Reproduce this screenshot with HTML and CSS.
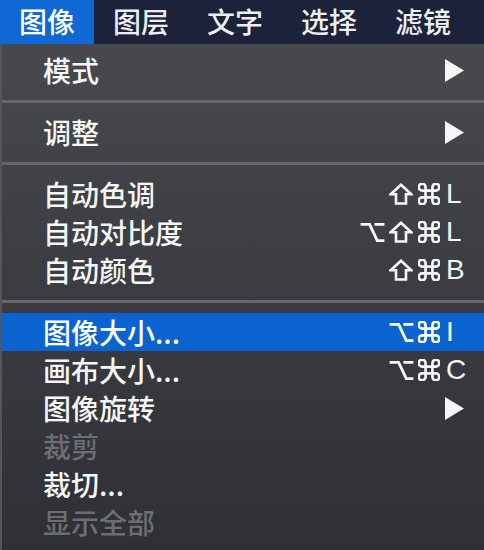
FILE: index.html
```html
<!DOCTYPE html>
<html lang="zh-CN">
<head>
<meta charset="utf-8">
<title>图像菜单</title>
<link rel="stylesheet" href="styles.css">
</head>
<body>
<svg class="defs" width="0" height="0" aria-hidden="true">
  <symbol id="opt" viewBox="0 0 26 22"><path d="M0.5 2.5H10L18 19.5H25.5M15 2.5H25.5" fill="none" stroke="currentColor" stroke-width="3"/></symbol>
  <symbol id="shift" viewBox="0 0 24 22"><path d="M12 1.8L1.8 11.2H7V20.5H17V11.2H22.2Z" fill="none" stroke="currentColor" stroke-width="2.6" stroke-linejoin="miter"/></symbol>
  <symbol id="cmd" viewBox="2.4 2.4 19.2 19.2"><path d="M15 6v12a3 3 0 1 0 3-3H6a3 3 0 1 0 3 3V6a3 3 0 1 0-3 3h12a3 3 0 1 0-3-3" fill="none" stroke="currentColor" stroke-width="2.3"/></symbol>
  <symbol id="tri" viewBox="0 0 19 23"><polygon points="0,0 19,11.5 0,23" fill="currentColor"/></symbol>
</svg>
<div class="screen">
  <nav class="menubar">
    <div class="mb-item active">图像</div>
    <div class="mb-item">图层</div>
    <div class="mb-item">文字</div>
    <div class="mb-item">选择</div>
    <div class="mb-item">滤镜</div>
  </nav>
  <div class="menu">
    <div class="row"><span class="label">模式</span><svg class="arrow"><use href="#tri"/></svg></div>
    <div class="sep"></div>
    <div class="row"><span class="label">调整</span><svg class="arrow"><use href="#tri"/></svg></div>
    <div class="sep"></div>
    <div class="row"><span class="label">自动色调</span><span class="keys"><svg class="ks"><use href="#shift"/></svg><svg class="kc"><use href="#cmd"/></svg><span class="kl">L</span></span></div>
    <div class="row"><span class="label">自动对比度</span><span class="keys"><svg class="ko"><use href="#opt"/></svg><svg class="ks"><use href="#shift"/></svg><svg class="kc"><use href="#cmd"/></svg><span class="kl">L</span></span></div>
    <div class="row"><span class="label">自动颜色</span><span class="keys"><svg class="ks"><use href="#shift"/></svg><svg class="kc"><use href="#cmd"/></svg><span class="kl">B</span></span></div>
    <div class="sep"></div>
    <div class="row selected"><span class="label">图像大小...</span><span class="keys"><svg class="ko"><use href="#opt"/></svg><svg class="kc"><use href="#cmd"/></svg><span class="kl">I</span></span></div>
    <div class="row"><span class="label">画布大小...</span><span class="keys"><svg class="ko"><use href="#opt"/></svg><svg class="kc"><use href="#cmd"/></svg><span class="kl">C</span></span></div>
    <div class="row"><span class="label">图像旋转</span><svg class="arrow"><use href="#tri"/></svg></div>
    <div class="row disabled"><span class="label">裁剪</span></div>
    <div class="row"><span class="label">裁切...</span></div>
    <div class="row disabled"><span class="label">显示全部</span></div>
  </div>
</div>
</body>
</html>
```

FILE: styles.css
```css
html, body {
  margin: 0;
  padding: 0;
  background: #2e3035;
}
body {
  font-family: "Noto Sans CJK SC", "Noto Sans", sans-serif;
  color: #f4f4f5;
}
.defs {
  position: absolute;
  width: 0;
  height: 0;
  overflow: hidden;
}
.screen {
  width: 484px;
  height: 550px;
  overflow: hidden;
  display: flex;
  flex-direction: column;
}
.menubar {
  height: 44px;
  background: #1b2239;
  display: flex;
  flex-shrink: 0;
}
.mb-item {
  width: 94px;
  box-sizing: border-box;
  padding-left: 19px;
  font-size: 28px;
  font-weight: 500;
  line-height: 43px;
  color: #eceef3;
}
.mb-item.active {
  background: #1068d4;
  color: #ffffff;
}
.menu {
  flex: 1;
  padding-top: 7px;
  border-left: 2px solid #54565b;
  background: linear-gradient(to bottom, #47494d 0%, #3a3c41 50%, #2e3035 100%);
}
.row {
  height: 38px;
  display: flex;
  align-items: center;
  justify-content: space-between;
  padding-left: 41px;
  padding-right: 18px;
  font-size: 28px;
  color: #f6f6f7;
}
.label {
  line-height: 36px;
  font-weight: 500;
}
.row.selected {
  background: #0b63cf;
  color: #ffffff;
}
.row.disabled {
  color: #6c6e73;
}
.sep {
  height: 3px;
  margin: 11px 0 10px;
  background: #65676b;
}
.arrow {
  width: 19px;
  height: 23px;
  margin-right: 2px;
}
.keys {
  display: flex;
  align-items: center;
}
.ko {
  width: 25px;
  height: 21px;
  margin-right: 4px;
}
.ks {
  width: 24px;
  height: 22px;
  margin-right: 5px;
}
.kc {
  width: 22px;
  height: 22px;
  margin-right: 6px;
}
.kl {
  width: 20px;
  text-align: left;
  font-family: "Liberation Sans", sans-serif;
  font-size: 28px;
  line-height: 38px;
}
```
